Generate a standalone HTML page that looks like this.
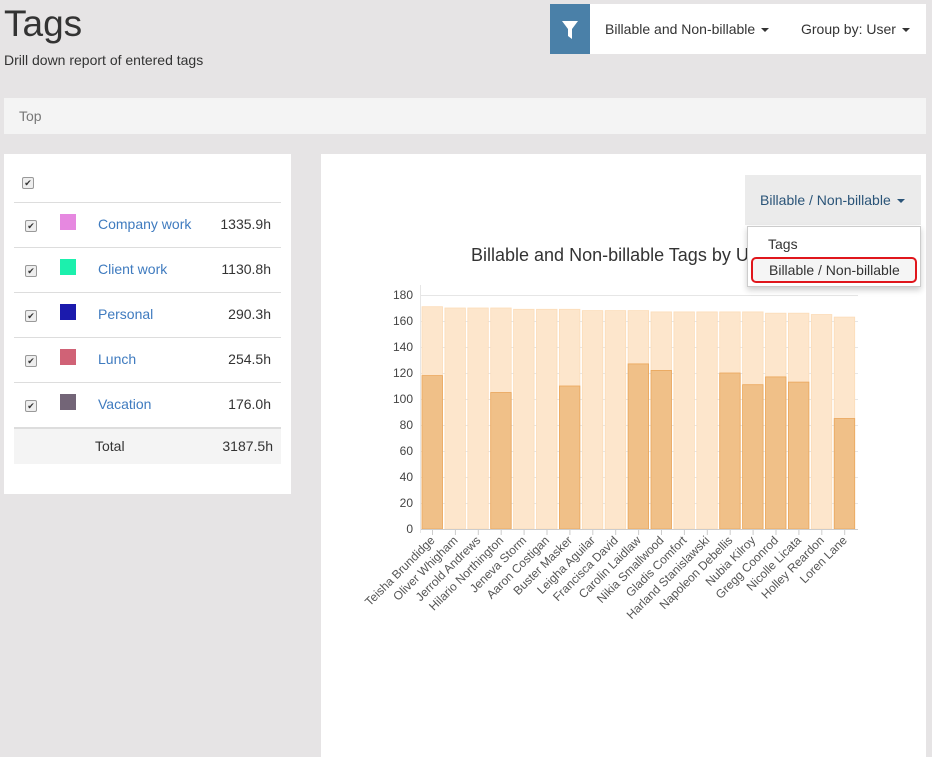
<!DOCTYPE html>
<html><head><meta charset="utf-8"><style>
body{margin:0;width:932px;height:757px;background:#e6e4e5;font-family:"Liberation Sans",sans-serif;position:relative;overflow:hidden;color:#333}
.abs{position:absolute}
h1{position:absolute;left:4px;top:3px;margin:0;font-size:37px;font-weight:normal;color:#333}
.sub{left:4px;top:52px;font-size:14px}
.tb{left:550px;top:4px;width:376px;height:50px;background:#fff}
.filt{left:550px;top:4px;width:40px;height:50px;background:#4a80a8}
.caret{display:inline-block;border-left:4px solid transparent;border-right:4px solid transparent;border-top:4px solid #333;vertical-align:middle;margin-left:6px}
.bc{left:4px;top:98px;width:922px;height:36px;background:#f4f4f4;font-size:14px;color:#777}
.lp{left:4px;top:154px;width:287px;height:340px;background:#fff}
.rp{left:321px;top:154px;width:605px;height:603px;background:#fff}
.row{position:absolute;left:10px;width:267px;height:44px;border-top:1px solid #ddd;font-size:14px}
.cb{position:absolute;width:10px;height:10px;border:1px solid #999;border-radius:2px;background:#eee;font-size:9px;line-height:10px;text-align:center;color:#333}
.sw{position:absolute;left:46px;top:11px;width:16px;height:16px}
.nm{position:absolute;left:84px;top:13px;color:#3f7bbf}
.hr{position:absolute;right:10px;top:13px;color:#333}
</style></head><body>
<h1>Tags</h1>
<div class="abs sub">Drill down report of entered tags</div>
<div class="abs tb"></div>
<div class="abs filt"><svg width="40" height="50"><path d="M12 17h16l-6 8v10l-4-3v-7z" fill="#fff"/></svg></div>
<div class="abs" style="left:605px;top:21px;font-size:14px">Billable and Non-billable<span class="caret"></span></div>
<div class="abs" style="left:801px;top:21px;font-size:14px">Group by: User<span class="caret"></span></div>
<div class="abs bc"><span style="position:absolute;left:15px;top:10px">Top</span></div>
<div class="abs lp">
<div class="cb" style="left:18px;top:23px">✔</div>
<div class="row" style="top:48px"><div class="cb" style="left:11px;top:17px">✔</div><div class="sw" style="background:#e688e0"></div><div class="nm">Company work</div><div class="hr">1335.9h</div></div>
<div class="row" style="top:93px"><div class="cb" style="left:11px;top:17px">✔</div><div class="sw" style="background:#1cf0ad"></div><div class="nm">Client work</div><div class="hr">1130.8h</div></div>
<div class="row" style="top:138px"><div class="cb" style="left:11px;top:17px">✔</div><div class="sw" style="background:#1b1aad"></div><div class="nm">Personal</div><div class="hr">290.3h</div></div>
<div class="row" style="top:183px"><div class="cb" style="left:11px;top:17px">✔</div><div class="sw" style="background:#d06276"></div><div class="nm">Lunch</div><div class="hr">254.5h</div></div>
<div class="row" style="top:228px"><div class="cb" style="left:11px;top:17px">✔</div><div class="sw" style="background:#736577"></div><div class="nm">Vacation</div><div class="hr">176.0h</div></div>
<div class="row" style="top:273px;height:35px;background:#f4f4f4;border-top:2px solid #ddd"><span style="position:absolute;left:81px;top:9px">Total</span><span style="position:absolute;right:8px;top:9px">3187.5h</span></div>
</div>
<div class="abs rp"></div>
<svg class="abs" style="left:0;top:0" width="932" height="757" font-family="Liberation Sans, sans-serif">
<text x="471" y="261" font-size="18" fill="#333">Billable and Non-billable Tags by U</text>
<g stroke="#e6e6e6" stroke-width="1">
<line x1="421" x2="858" y1="295.5" y2="295.5"/><line x1="421" x2="858" y1="321.5" y2="321.5"/><line x1="421" x2="858" y1="347.5" y2="347.5"/><line x1="421" x2="858" y1="373.5" y2="373.5"/><line x1="421" x2="858" y1="399.5" y2="399.5"/><line x1="421" x2="858" y1="425.5" y2="425.5"/><line x1="421" x2="858" y1="451.5" y2="451.5"/><line x1="421" x2="858" y1="477.5" y2="477.5"/><line x1="421" x2="858" y1="503.5" y2="503.5"/>
<line x1="420.5" x2="420.5" y1="285" y2="533"/>
</g>
<g font-size="12" fill="#444" text-anchor="end">
<text x="413" y="299">180</text><text x="413" y="325">160</text><text x="413" y="351">140</text><text x="413" y="377">120</text><text x="413" y="403">100</text><text x="413" y="429">80</text><text x="413" y="455">60</text><text x="413" y="481">40</text><text x="413" y="507">20</text><text x="413" y="533">0</text>
</g>
<g id="bars"></g>
<line x1="421" x2="858" y1="529.5" y2="529.5" stroke="#ccc"/>
<g id="lab" font-size="12" fill="#555" text-anchor="end"></g>
</svg>
<script>
var tot=[171,170,170,170,169,169,169,168,168,168,167,167,167,167,167,166,166,165,163];
var bil=[118,0,0,105,0,0,110,0,0,127,122,0,0,120,111,117,113,0,85];
var names=["Teisha Brundidge","Oliver Whigham","Jerrold Andrews","Hilario Northington","Jeneva Storm","Aaron Costigan","Buster Masker","Leigha Aguilar","Francisca David","Carolin Laidlaw","Nikia Smallwood","Gladis Comfort","Harland Stanislawski","Napoleon Debellis","Nubia Kilroy","Gregg Coonrod","Nicolle Licata","Holley Reardon","Loren Lane"];
var s="",l="";
for(var i=0;i<19;i++){var x=422+i*22.9,k=1.3;
s+='<rect x="'+x+'" y="'+(529-tot[i]*k)+'" width="20.5" height="'+(tot[i]*k)+'" fill="#fde6cc" stroke="#fcdcb8" stroke-width="0.8"/>';
if(bil[i])s+='<rect x="'+x+'" y="'+(529-bil[i]*k)+'" width="20.5" height="'+(bil[i]*k)+'" fill="#f0c088" stroke="#eaa65a" stroke-width="0.8"/>';
var cx=x+10.5;
s+='<line x1="'+cx+'" x2="'+cx+'" y1="529" y2="535" stroke="#ccc"/>';
l+='<text transform="translate('+(cx+3)+',541) rotate(-45)">'+names[i]+'</text>';}
document.getElementById('bars').innerHTML=s;document.getElementById('lab').innerHTML=l;
</script>
<div class="abs" style="left:745px;top:175px;width:176px;height:50px;background:#ebebeb;font-size:14px;color:#2a5478"><span style="position:absolute;left:15px;top:17px">Billable / Non-billable<span class="caret" style="border-top-color:#2a5478"></span></span></div>
<div class="abs" style="left:747px;top:226px;width:174px;height:61px;background:#fff;border:1px solid #ccc;box-shadow:0 3px 6px rgba(0,0,0,.2);font-size:14px;box-sizing:border-box">
<span style="position:absolute;left:20px;top:9px">Tags</span>
<div style="position:absolute;left:3px;top:30px;width:166px;height:26px;border:2px solid #e0161c;border-radius:5px;background:#f5f5f5;box-sizing:border-box"><span style="position:absolute;left:16px;top:3px">Billable / Non-billable</span></div>
</div>
</body></html>
